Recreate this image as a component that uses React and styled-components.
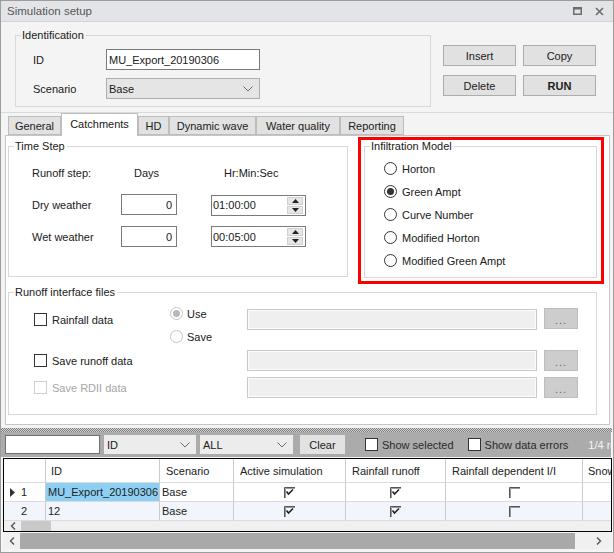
import React from 'react';
import styled, { createGlobalStyle } from 'styled-components';

const Global = createGlobalStyle`
  html, body { margin: 0; padding: 0; background: #fff; }
  body { font-family: "Liberation Sans", Arial, sans-serif; font-size: 11px; color: #202020; }
  * { box-sizing: border-box; }
`;

const Window = styled.div`
  width: 614px;
  height: 553px;
  border: 1px solid #9c9c9c;
  background: #f4f4f4;
  display: flex;
  flex-direction: column;
  overflow: hidden;
`;

const TitleBar = styled.div`
  height: 21px;
  flex: none;
  background: #e3e4e8;
  border-bottom: 1px solid #d2d3d7;
  display: flex;
  align-items: center;
  padding: 0 9px 0 6px;
  color: #575757;
  font-size: 11.5px;
`;

const TitleText = styled.span`
  flex: 1;
`;

const TitleIcons = styled.div`
  display: flex;
  gap: 13px;
  align-items: center;
`;

const TopArea = styled.div`
  height: 91px;
  flex: none;
  border-bottom: 1px solid #dadada;
  display: flex;
  align-items: flex-start;
  padding: 7px 0 0 14px;
`;

const Group = styled.fieldset`
  margin: 0;
  padding: 0;
  min-width: 0;
  border: 1px solid #d8d8d8;
  width: ${p => p.$w}px;
  height: ${p => p.$h}px;
  margin-top: ${p => p.$mt || 0}px;
  margin-left: ${p => p.$ml || 0}px;
`;

const Legend = styled.legend`
  margin-left: 5px;
  padding: 0 2px 0 1px;
  line-height: 13px;
  color: #202020;
`;

const IdentBody = styled.div`
  display: grid;
  grid-template-columns: 73px 154px;
  row-gap: 8px;
  padding: 7px 0 0 17px;
  align-items: center;
`;

const Label = styled.span`
  color: ${p => (p.$disabled ? '#a6a6a6' : '#202020')};
  white-space: nowrap;
`;

const TextBox = styled.div`
  height: 21px;
  border: 1px solid #7a7a7a;
  background: #fff;
  display: flex;
  align-items: center;
  justify-content: ${p => (p.$right ? 'flex-end' : 'flex-start')};
  padding: ${p => (p.$right ? '0 4px 0 0' : '0 0 0 2px')};
  width: ${p => (p.$w ? `${p.$w}px` : 'auto')};
`;

const Select = styled.div`
  height: 21px;
  border: 1px solid #adadad;
  background: #e5e5e5;
  display: flex;
  align-items: center;
  justify-content: space-between;
  padding: 0 6px 0 2px;
`;

const ButtonGrid = styled.div`
  display: grid;
  grid-template-columns: 73px 73px;
  column-gap: 7px;
  row-gap: 9px;
  margin: 16px 0 0 12px;
`;

const Button = styled.div`
  height: 21px;
  background: #e1e1e1;
  border: 1px solid #adadad;
  display: flex;
  align-items: center;
  justify-content: center;
  font-weight: ${p => (p.$bold ? 'bold' : 'normal')};
  color: #202020;
`;

const TabStrip = styled.div`
  height: 22px;
  flex: none;
  display: flex;
  align-items: flex-end;
  padding-left: 7px;
`;

const Tab = styled.div`
  width: ${p => p.$w}px;
  height: ${p => (p.$active ? 23 : 19)}px;
  margin-bottom: ${p => (p.$active ? -1 : 0)}px;
  background: ${p => (p.$active ? '#fff' : '#e2e2e2')};
  border: 1px solid #bdbdbd;
  border-bottom: ${p => (p.$active ? 'none' : '1px solid #bdbdbd')};
  display: flex;
  align-items: center;
  justify-content: center;
  padding-bottom: ${p => (p.$active ? 2 : 0)}px;
  position: relative;
  z-index: ${p => (p.$active ? 2 : 0)};
  color: #202020;
`;

const TabPage = styled.div`
  height: 290px;
  flex: none;
  margin: 0 3px 0 4px;
  background: #fff;
  border: 1px solid #c6c6c6;
  padding: 0 0 0 2px;
  position: relative;
  z-index: 1;
`;

const PageRow = styled.div`
  display: flex;
  align-items: flex-start;
`;

const TimeGrid = styled.div`
  display: grid;
  grid-template-columns: 89px 90px 95px;
  grid-template-rows: 20px 21px 21px;
  row-gap: 11px;
  padding: 10px 0 0 23px;
  align-items: center;
`;

const HeadText = styled.span`
  padding-left: ${p => p.$pl || 0}px;
`;

const SpinBox = styled.div`
  height: 21px;
  width: 95px;
  border: 1px solid #7a7a7a;
  background: #fff;
  display: flex;
  align-items: center;
  padding: 0 1px 0 1px;
  margin-top: ${p => p.$mt || 0}px;
`;

const SpinText = styled.span`
  flex: 1;
`;

const SpinButtons = styled.div`
  display: flex;
  flex-direction: column;
  gap: 1px;
  margin-right: 1px;
`;

const SpinBtn = styled.div`
  width: 16px;
  height: 8px;
  background: #e6e6e6;
  border: 1px solid #d0d0d0;
  display: flex;
  align-items: center;
  justify-content: center;
`;

const Highlight = styled.div`
  margin: 1px 0 0 10px;
  width: 246px;
  height: 147px;
  border: 3px solid #ff0000;
  padding: 0 3px 2px 3px;
  display: flex;
`;

const RadioList = styled.div`
  display: flex;
  flex-direction: column;
  padding: 4px 0 0 19px;
`;

const OptionRow = styled.div`
  height: 23px;
  display: flex;
  align-items: center;
  gap: ${p => p.$gap || 5}px;
`;

const RadioCircle = styled.span`
  width: 13px;
  height: 13px;
  border-radius: 50%;
  border: 1px solid ${p => (p.$disabled ? '#c4c4c4' : '#333')};
  background: #fff;
  display: flex;
  align-items: center;
  justify-content: center;
  flex: none;
  &::after {
    content: '';
    display: ${p => (p.$checked ? 'block' : 'none')};
    width: 7px;
    height: 7px;
    border-radius: 50%;
    background: ${p => (p.$disabled ? '#b8b8b8' : '#333')};
  }
`;

const CheckBox = styled.span`
  width: 13px;
  height: 13px;
  border: 1px solid ${p => (p.$disabled ? '#cfcfcf' : '#333')};
  background: #fff;
  flex: none;
`;

const FilesBody = styled.div`
  padding: 3px 0 0 25px;
`;

const FileRow = styled.div`
  display: flex;
  align-items: flex-start;
  height: ${p => p.$h}px;
  margin-top: ${p => p.$mt || 0}px;
`;

const CheckCell = styled.div`
  width: ${p => p.$w}px;
  height: 21px;
  display: flex;
  align-items: center;
  gap: 5px;
  margin-top: ${p => p.$mt || 0}px;
  flex: none;
`;

const RadioCol = styled.div`
  width: 77px;
  display: flex;
  flex-direction: column;
  flex: none;
`;

const FileField = styled.div`
  width: 290px;
  height: 21px;
  background: #efefef;
  border: 1px solid #c9c9c9;
  box-shadow: inset 0 0 0 1px #fbfbfb;
  margin-top: ${p => p.$mt || 0}px;
  flex: none;
`;

const DotsButton = styled.div`
  width: 34px;
  height: 21px;
  margin-left: 7px;
  margin-top: ${p => p.$mt || 0}px;
  background: #cdcdcd;
  border: 1px solid #bdbdbd;
  color: #666;
  display: flex;
  align-items: center;
  justify-content: center;
  letter-spacing: 1px;
  padding-top: 2px;
  flex: none;
`;

const Gap = styled.div`
  height: 3px;
  flex: none;
`;

const Splitter = styled.div`
  height: 4px;
  flex: none;
  margin-right: 1px;
  background: repeating-conic-gradient(#7d7d7d 0 25%, #d4d4d4 0 50%) 0 0 / 2px 2px;
`;

const FilterBar = styled.div`
  height: 25px;
  flex: none;
  margin-right: 2px;
  background: #ababab;
  display: flex;
  align-items: flex-start;
  padding: 3px 0 0 4px;
  overflow: hidden;
  white-space: nowrap;
`;

const SearchBox = styled.div`
  width: 95px;
  height: 19px;
  background: #fff;
  border: 1px solid #707070;
  flex: none;
`;

const Combo = styled.div`
  width: ${p => p.$w}px;
  height: 19px;
  margin-left: 4px;
  background: #ececec;
  display: flex;
  align-items: center;
  justify-content: space-between;
  padding: 0 6px 0 3px;
  flex: none;
`;

const ClearButton = styled.div`
  width: 45px;
  height: 19px;
  margin-left: 7px;
  background: #e2e2e2;
  display: flex;
  align-items: center;
  justify-content: center;
  flex: none;
`;

const BarCheck = styled.div`
  height: 19px;
  margin-left: ${p => p.$ml}px;
  display: flex;
  align-items: center;
  gap: 4px;
  color: #2a2a2a;
  flex: none;
`;

const Status = styled.span`
  margin-left: ${p => p.$ml}px;
  height: 19px;
  display: flex;
  align-items: center;
  color: #f6f6f6;
`;

const GridBox = styled.div`
  flex: none;
  margin: 1px 1px 0 2px;
  border: 1px solid #000;
  background: #fff;
  overflow: hidden;
`;

const GridTable = styled.div`
  display: grid;
  grid-template-columns: 42px 114px 74px 112px 100px 137px 60px;
  grid-template-rows: 24px 19px 19px;
  width: 640px;
`;

const Cell = styled.div`
  border-right: 1px solid #cbcbcb;
  border-bottom: 1px solid #dcdcdc;
  background: ${p => p.$bg || '#fff'};
  display: flex;
  align-items: center;
  justify-content: ${p => (p.$center ? 'center' : 'flex-start')};
  padding-left: ${p => (p.$center ? 0 : p.$pl ?? 5)}px;
  white-space: nowrap;
  overflow: hidden;
  color: #222;
`;

const RowHead = styled(Cell)`
  gap: 6px;
  padding-left: ${p => p.$pl}px;
`;

const InnerScroll = styled.div`
  height: 10px;
  background: #f0f0f0;
  display: flex;
  align-items: center;
  padding-left: 6px;
`;

const InnerThumb = styled.div`
  width: 30px;
  height: 10px;
  margin-left: 5px;
  background: #c9c9c9;
`;

const OuterScroll = styled.div`
  flex: none;
  height: 16px;
  margin: 1px 1px 0 2px;
  background: #f0f0f0;
  display: flex;
  align-items: stretch;
`;

const ScrollArrow = styled.div`
  width: ${p => p.$w}px;
  display: flex;
  align-items: center;
  justify-content: ${p => (p.$end ? 'flex-end' : 'center')};
  padding-right: ${p => (p.$end ? 10 : 0)}px;
  flex: none;
`;

const ScrollThumb = styled.div`
  flex: 1;
  background: #a9a9a9;
`;

const Chevron = () => (
  <svg width="10" height="6" viewBox="0 0 10 6">
    <path d="M0.5 0.5 L5 5 L9.5 0.5" fill="none" stroke="#6a6a6a" strokeWidth="1" />
  </svg>
);

const ArrowLeft = () => (
  <svg width="6" height="8" viewBox="0 0 6 8">
    <path d="M5 0.5 L1.5 4 L5 7.5" fill="none" stroke="#555" strokeWidth="1.4" />
  </svg>
);

const ArrowRight = () => (
  <svg width="6" height="8" viewBox="0 0 6 8">
    <path d="M1 0.5 L4.5 4 L1 7.5" fill="none" stroke="#555" strokeWidth="1.4" />
  </svg>
);

const SpinUp = () => (
  <svg width="7" height="4" viewBox="0 0 7 4"><path d="M0 4 L3.5 0 L7 4 Z" fill="#222" /></svg>
);
const SpinDown = () => (
  <svg width="7" height="4" viewBox="0 0 7 4"><path d="M0 0 L3.5 4 L7 0 Z" fill="#222" /></svg>
);

const GridCheck = ({ checked }) => (
  <svg width="11" height="11" viewBox="0 0 11 11">
    <path d="M0.5 11 V0.5 H11" fill="none" stroke="#555" strokeWidth="1" />
    <path d="M1.5 11 V1.5 H11" fill="none" stroke="#999" strokeWidth="1" />
    {checked && <path d="M2.5 4.5 L4.5 7 L9 2.5" fill="none" stroke="#222" strokeWidth="1.6" />}
  </svg>
);

const RowArrow = () => (
  <svg width="5" height="9" viewBox="0 0 5 9"><path d="M0 0 L5 4.5 L0 9 Z" fill="#333" /></svg>
);

const MaxIcon = () => (
  <svg width="9" height="8" viewBox="0 0 9 8">
    <rect x="0.75" y="0.75" width="7.5" height="6.5" fill="none" stroke="#6d6d6d" strokeWidth="1.5" />
    <rect x="0" y="0" width="9" height="2.5" fill="#6d6d6d" />
  </svg>
);

const CloseIcon = () => (
  <svg width="9" height="9" viewBox="0 0 9 9">
    <path d="M1 1 L8 8 M8 1 L1 8" stroke="#6d6d6d" strokeWidth="1.6" />
  </svg>
);

const tabs = [
  { t: 'General', w: 53 },
  { t: 'Catchments', w: 77, active: true },
  { t: 'HD', w: 31 },
  { t: 'Dynamic wave', w: 87 },
  { t: 'Water quality', w: 84 },
  { t: 'Reporting', w: 64 },
];

const models = ['Horton', 'Green Ampt', 'Curve Number', 'Modified Horton', 'Modified Green Ampt'];

const rows = [
  { n: '1', id: 'MU_Export_20190306', sc: 'Base', bg: '#ffffff', sel: true },
  { n: '2', id: '12', sc: 'Base', bg: '#f2f6fc' },
];

export default function App() {
  return (
    <>
      <Global />
      <Window>
        <TitleBar>
          <TitleText>Simulation setup</TitleText>
          <TitleIcons>
            <MaxIcon />
            <CloseIcon />
          </TitleIcons>
        </TitleBar>

        <TopArea>
          <Group $w={416} $h={78}>
            <Legend>Identification</Legend>
            <IdentBody>
              <Label>ID</Label>
              <TextBox>MU_Export_20190306</TextBox>
              <Label>Scenario</Label>
              <Select>
                <span>Base</span>
                <Chevron />
              </Select>
            </IdentBody>
          </Group>
          <ButtonGrid>
            <Button>Insert</Button>
            <Button>Copy</Button>
            <Button>Delete</Button>
            <Button $bold>RUN</Button>
          </ButtonGrid>
        </TopArea>

        <TabStrip>
          {tabs.map(tb => (
            <Tab key={tb.t} $w={tb.w} $active={tb.active}>{tb.t}</Tab>
          ))}
        </TabStrip>

        <TabPage>
          <PageRow>
            <Group $w={340} $h={137} $mt={4}>
              <Legend>Time Step</Legend>
              <TimeGrid>
                <Label>Runoff step:</Label>
                <HeadText $pl={13}>Days</HeadText>
                <HeadText $pl={13}>Hr:Min:Sec</HeadText>

                <Label>Dry weather</Label>
                <TextBox $right $w={56}>0</TextBox>
                <SpinBox $mt={1}>
                  <SpinText>01:00:00</SpinText>
                  <SpinButtons>
                    <SpinBtn><SpinUp /></SpinBtn>
                    <SpinBtn><SpinDown /></SpinBtn>
                  </SpinButtons>
                </SpinBox>

                <Label>Wet weather</Label>
                <TextBox $right $w={56}>0</TextBox>
                <SpinBox>
                  <SpinText>00:05:00</SpinText>
                  <SpinButtons>
                    <SpinBtn><SpinUp /></SpinBtn>
                    <SpinBtn><SpinDown /></SpinBtn>
                  </SpinButtons>
                </SpinBox>
              </TimeGrid>
            </Group>

            <Highlight>
              <Group $w={233} $h={138}>
                <Legend>Infiltration Model</Legend>
                <RadioList>
                  {models.map(m => (
                    <OptionRow key={m}>
                      <RadioCircle $checked={m === 'Green Ampt'} />
                      <Label>{m}</Label>
                    </OptionRow>
                  ))}
                </RadioList>
              </Group>
            </Highlight>
          </PageRow>

          <Group $w={589} $h={129} $mt={2}>
            <Legend>Runoff interface files</Legend>
            <FilesBody>
              <FileRow $h={46}>
                <CheckCell $w={136} $mt={7}>
                  <CheckBox />
                  <Label>Rainfall data</Label>
                </CheckCell>
                <RadioCol>
                  <OptionRow $gap={4}>
                    <RadioCircle $checked $disabled />
                    <Label>Use</Label>
                  </OptionRow>
                  <OptionRow $gap={4}>
                    <RadioCircle $disabled />
                    <Label>Save</Label>
                  </OptionRow>
                </RadioCol>
                <FileField $mt={7} />
                <DotsButton $mt={6}>...</DotsButton>
              </FileRow>
              <FileRow $h={21} $mt={2}>
                <CheckCell $w={213}>
                  <CheckBox />
                  <Label>Save runoff data</Label>
                </CheckCell>
                <FileField />
                <DotsButton>...</DotsButton>
              </FileRow>
              <FileRow $h={21} $mt={6}>
                <CheckCell $w={213}>
                  <CheckBox $disabled />
                  <Label $disabled>Save RDII data</Label>
                </CheckCell>
                <FileField />
                <DotsButton>...</DotsButton>
              </FileRow>
            </FilesBody>
          </Group>
        </TabPage>

        <Gap />
        <Splitter />
        <FilterBar>
          <SearchBox />
          <Combo $w={92}>
            <span>ID</span>
            <Chevron />
          </Combo>
          <Combo $w={93}>
            <span>ALL</span>
            <Chevron />
          </Combo>
          <ClearButton>Clear</ClearButton>
          <BarCheck $ml={20}>
            <CheckBox />
            <span>Show selected</span>
          </BarCheck>
          <BarCheck $ml={14}>
            <CheckBox />
            <span>Show data errors</span>
          </BarCheck>
          <Status $ml={20}>1/4 rows</Status>
        </FilterBar>

        <GridBox>
          <GridTable>
            <Cell />
            <Cell>ID</Cell>
            <Cell $pl={6}>Scenario</Cell>
            <Cell $pl={6}>Active simulation</Cell>
            <Cell $pl={6}>Rainfall runoff</Cell>
            <Cell $pl={6}>Rainfall dependent I/I</Cell>
            <Cell $pl={5}>Snow</Cell>
            {rows.map(r => (
              <React.Fragment key={r.n}>
                <RowHead $bg={r.bg} $pl={r.sel ? 6 : 17}>
                  {r.sel && <RowArrow />}
                  <span>{r.n}</span>
                </RowHead>
                <Cell $bg={r.sel ? '#8ed0f4' : r.bg} $pl={2}>{r.id}</Cell>
                <Cell $bg={r.bg} $pl={2}>{r.sc}</Cell>
                <Cell $bg={r.bg} $center><GridCheck checked /></Cell>
                <Cell $bg={r.bg} $center><GridCheck checked /></Cell>
                <Cell $bg={r.bg} $center><GridCheck /></Cell>
                <Cell $bg={r.bg} />
              </React.Fragment>
            ))}
          </GridTable>
          <InnerScroll>
            <ArrowLeft />
            <InnerThumb />
          </InnerScroll>
        </GridBox>

        <OuterScroll>
          <ScrollArrow $w={17}><ArrowLeft /></ScrollArrow>
          <ScrollThumb />
          <ScrollArrow $w={37} $end><ArrowRight /></ScrollArrow>
        </OuterScroll>
      </Window>
    </>
  );
}
